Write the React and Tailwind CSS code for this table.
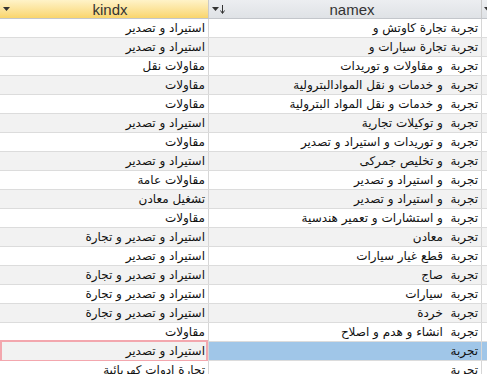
const rows = [
  ["استيراد و تصدير", "تجربة تجارة كاوتش و"],
  ["استيراد و تصدير", "تجربة تجارة سيارات و"],
  ["مقاولات نقل", "تجربة  و مقاولات و توريدات"],
  ["مقاولات", "تجربة  و خدمات و نقل الموادالبترولية"],
  ["مقاولات", "تجربة  و خدمات و نقل المواد البترولية"],
  ["استيراد و تصدير", "تجربة  و توكيلات تجارية"],
  ["مقاولات", "تجربة  و توريدات و استيراد و تصدير"],
  ["استيراد و تصدير", "تجربة  و تخليص جمركى"],
  ["مقاولات عامة", "تجربة  و استيراد و تصدير"],
  ["تشغيل معادن", "تجربة  و استيراد و تصدير"],
  ["مقاولات", "تجربة  و استشارات و تعمير هندسية"],
  ["استيراد و تصدير و تجارة", "تجربة  معادن"],
  ["استيراد و تصدير", "تجربة  قطع غيار سيارات"],
  ["استيراد و تصدير و تجارة", "تجربة  صاج"],
  ["استيراد و تصدير و تجارة", "تجربة  سيارات"],
  ["استيراد و تصدير و تجارة", "تجربة  خردة"],
  ["مقاولات", "تجربة  انشاء و هدم و اصلاح"],
  ["استيراد و تصدير", "تجربة"],
  ["تجارة ادوات كهربائية", "تجربة"],
];

const SELECTED = 17;

function Caret() {
  return (
    <svg width="7" height="4" viewBox="0 0 7 4" className="shrink-0">
      <path d="M0 0h7L3.5 4z" fill="#333" />
    </svg>
  );
}

export default function App() {
  return (
    <div className="w-[487px] h-[374px] overflow-hidden bg-white text-[#111] font-['DejaVu_Sans',sans-serif]">
      {/* header */}
      <div className="flex h-[19px] border-b border-[#c3c6cb]">
        <div className="w-[209px] shrink-0 flex items-center border-r border-[#c9c9c9] bg-gradient-to-b from-[#fff3c8] to-[#f9d56b] pl-[3px]">
          <Caret />
          <span className="flex-1 text-center text-[15px] leading-none text-[#333] font-['Liberation_Sans',sans-serif] pl-[2px]">kindx</span>
        </div>
        <div className="w-[273px] shrink-0 flex items-center border-r border-[#c9c9c9] bg-gradient-to-b from-[#eceef1] to-[#dfe2e6] pl-[3px]">
          <Caret />
          <svg width="5" height="9" viewBox="0 0 5 9" className="ml-[1px] shrink-0">
            <path d="M2.5 0v8M0.5 5.5L2.5 8.5L4.5 5.5" stroke="#333" fill="none" strokeWidth="1" />
          </svg>
          <span className="flex-1 text-center text-[15px] leading-none text-[#333] font-['Liberation_Sans',sans-serif] pr-[2px]">namex</span>
        </div>
        <div className="flex-1 flex items-center bg-gradient-to-b from-[#eceef1] to-[#dfe2e6] pl-[2px]">
          <Caret />
        </div>
      </div>

      {rows.map(([kind, name], i) => {
        const sel = i === SELECTED;
        const bg = i % 2 === 1 ? "bg-[#f2f2f2]" : "bg-white";
        return (
          <div key={i} className="flex h-[19px] border-b border-[#dcdcdc]">
            <div className={`relative w-[209px] shrink-0 flex items-center justify-end border-r border-[#d6d6d6] pr-[3px] ${bg}`}>
              <span dir="rtl" className="whitespace-pre text-[12px] leading-none">{kind}</span>
              {sel && <div className="absolute left-0 right-0 -top-[2px] -bottom-[2px] border-2 border-[#f3a7ae]" />}
            </div>
            <div className={`w-[273px] shrink-0 flex items-center justify-end border-r border-[#d6d6d6] pr-[3px] ${sel ? "bg-[#a0c6e8]" : bg}`}>
              <span dir="rtl" className="whitespace-pre text-[12px] leading-none">{name}</span>
            </div>
            <div className={`flex-1 ${sel ? "bg-[#a0c6e8]" : bg}`} />
          </div>
        );
      })}
    </div>
  );
}
